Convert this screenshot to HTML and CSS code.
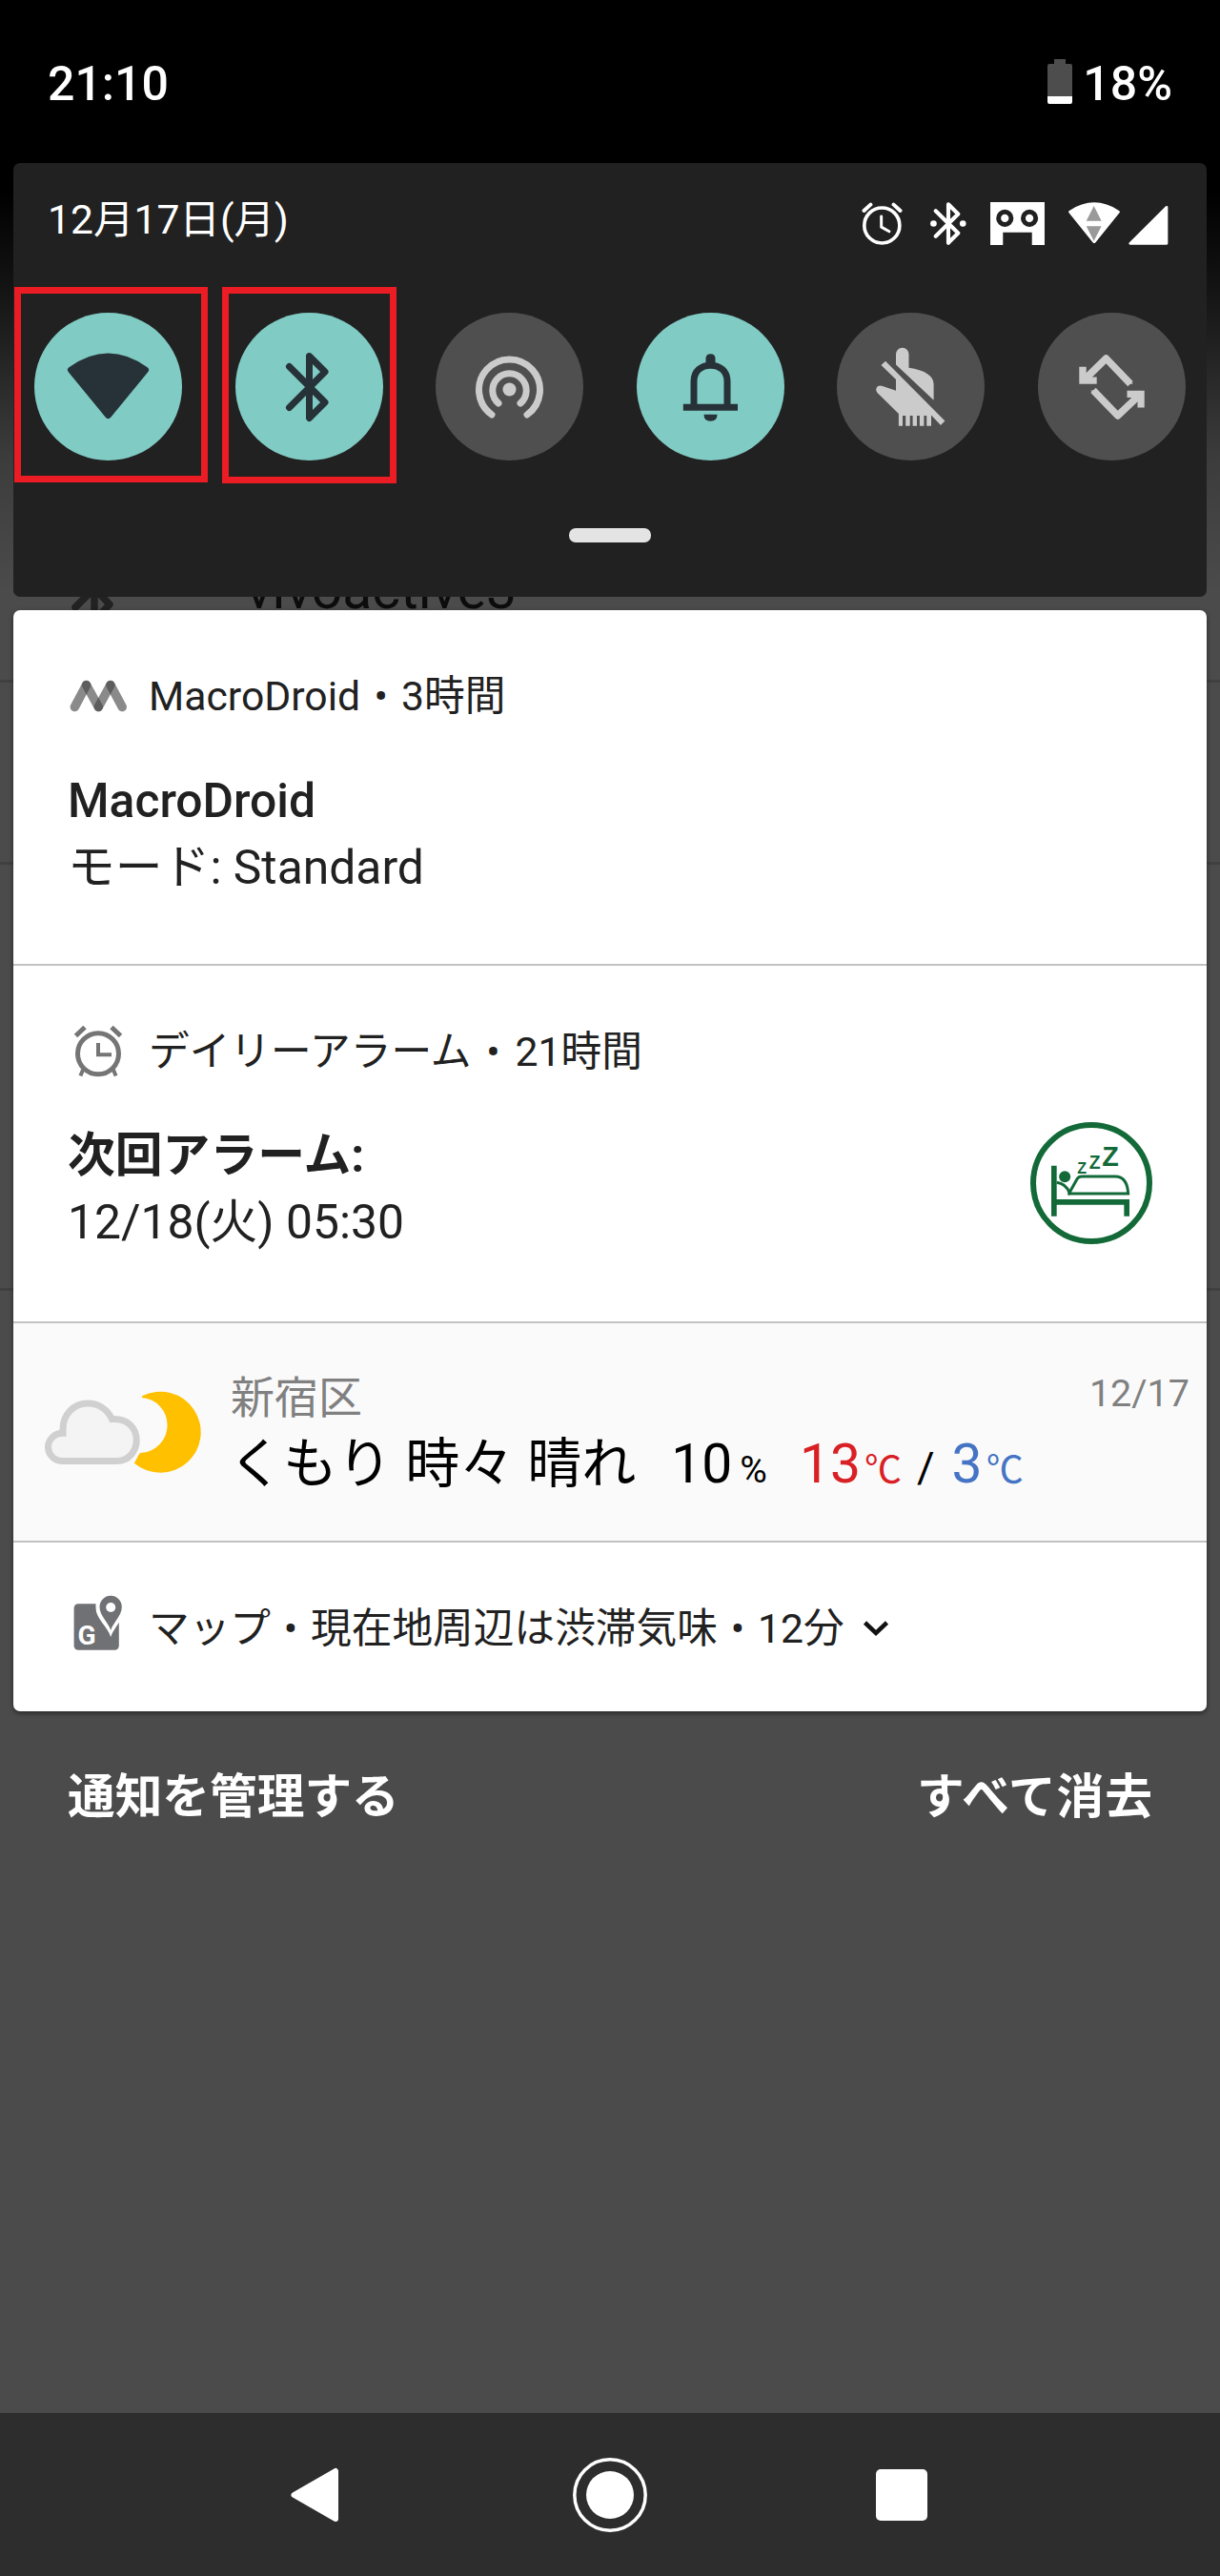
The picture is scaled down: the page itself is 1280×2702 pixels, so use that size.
FILE: index.html
```html
<!DOCTYPE html>
<html lang="ja">
<head>
<meta charset="utf-8">
<title>通知シェード</title>
<link rel="stylesheet" href="styles.css">
</head>
<body>
<div class="screen">
  <div class="backdrop-line line-a"></div>
  <div class="backdrop-line line-b"></div>
  <div class="backdrop-line line-c"></div>

  <header class="status-bar">
    <span class="clock">21:10</span>
    <span class="battery">
      <svg width="26" height="47" viewBox="0 0 26 47"><path fill="#4d4d4d" d="M7 0h12v5h5q2 0 2 2v32H0V7q0-2 2-2h5z"/><path fill="#fff" d="M0 39h26v6q0 2-2 2H2q-2 0-2-2z"/></svg>
      <span class="battery-level">18%</span>
    </span>
  </header>

  <section class="quick-settings">
    <div class="qs-header">
      <span class="date">12月17日(月)</span>
      <span class="qs-icons">
        <svg class="i-alarm" width="43" height="45" viewBox="132 546 129 136" fill="none" stroke="#fff" stroke-linecap="round" stroke-linejoin="round"><circle cx="196" cy="620" r="56" stroke-width="11"/><path stroke-width="9" d="M194 591V625L219 639"/><path stroke-width="12" d="M139 573L160 554M233 554L254 573"/></svg>
        <svg class="i-bt" width="38" height="45" viewBox="347 546 114 136" fill="none" stroke="#fff" stroke-linecap="round" stroke-linejoin="round"><path stroke-width="12.500" d="M364 574L435 644L404 675V553L435 584L364 654"/><circle cx="357" cy="614" r="10" fill="#fff" stroke="none"/><circle cx="450" cy="614" r="10" fill="#fff" stroke="none"/></svg>
        <svg class="i-tape" width="57" height="45" viewBox="537 546 172 136"><path fill="#fff" d="M537 546H709V682H669V642H577V682H537z"/><g fill="#fff" stroke="#212121" stroke-width="15"><circle cx="583" cy="597" r="20"/><circle cx="661" cy="597" r="20"/></g></svg>
        <svg class="i-wifi" width="54" height="45" viewBox="783 546 162 136"><path fill="#fff" stroke="#fff" stroke-width="10" stroke-linejoin="round" d="M864 671L788 577Q864 527 940 577z"/><path fill="#9a9a9a" d="M863 558L887 606H839zM839 622H887L863 669z"/></svg>
        <svg width="42" height="45" viewBox="974 546 125 136"><path fill="#fff" stroke="#fff" stroke-width="8" stroke-linejoin="round" d="M978 677L1094 562V677z"/></svg>
      </span>
    </div>
    <div class="tiles">
      <div class="tile on">
        <svg viewBox="0 0 155 155"><path fill="#263238" stroke="#263238" stroke-width="7" stroke-linejoin="round" d="M77.5 107.5L38.5 60Q77.5 32 116.5 60z"/></svg>
        <div class="mark mark-wifi"></div>
      </div>
      <div class="tile on">
        <svg viewBox="0 0 155 155" fill="none" stroke="#263238" stroke-width="7" stroke-linecap="round" stroke-linejoin="round"><path d="M56.5 56.5L94 94L77.5 110.500V45.500L94 62L56.5 99.500"/></svg>
        <div class="mark mark-bt"></div>
      </div>
      <div class="tile">
        <svg viewBox="0 0 155 155" fill="none" stroke="#cbcbcb" stroke-width="7" stroke-linecap="round"><circle cx="77.5" cy="80.500" r="7" fill="#cbcbcb" stroke="none"/><path d="M66 95A17.700 17.700 0 1 1 89 95M59 107A32 32 0 1 1 96 107"/></svg>
      </div>
      <div class="tile on">
        <svg viewBox="0 0 155 155" fill="none" stroke="#263238" stroke-width="7"><path d="M48.800 99.200H106M60 97V72C60 61 68 55.200 77.500 55.200S95 61 95 72V97"/><path fill="#263238" stroke="none" d="M72.500 54V48Q72.500 43.300 77.500 43.300T82.500 48V54zM70.500 106.700H84.500Q84.500 113.700 77.500 113.700T70.500 106.700z"/></svg>
      </div>
      <div class="tile">
        <svg viewBox="0 0 155 155" fill="#cbcbcb"><path d="M62 54.400V43.500A6.700 6.700 0 0 1 75.500 43.500V57.700C92 60 101.600 66 101.600 75V91.700z"/><path d="M46.500 55L51 50.700L113.400 113.400L109 118L99 107.500V118.700H94.200V108H91.400V118.700H86.900V108H84V118.700H79.600V108H76.700V118.700H72.200V108H69V118.700H64.900V106L42.500 84C39 79 43.500 75 48 77L62 81.700V70z"/></svg>
      </div>
      <div class="tile">
        <svg viewBox="0 0 155 155" fill="none" stroke="#cbcbcb" stroke-width="7.500" stroke-linejoin="round"><path d="M97 74.700L71.500 48L48 71M58 81.400L83.700 108L108.500 84.500"/><path fill="#cbcbcb" stroke="none" d="M92 74.700H99.700L96 70zM55.200 81.400H63L60 86zM43.300 56.700H50.700V67.400H61.700V74.700H43.300zM93.500 81.700H111.700V99.500H104.500V89H93.500z"/></svg>
      </div>
    </div>
    <div class="handle"></div>
  </section>

  <div class="peek">
    <svg width="46" height="60" viewBox="0 0 46 60" fill="none" stroke="#222" stroke-width="7.500" stroke-linecap="round" stroke-linejoin="round"><path d="M4 28L24 8L40 25L24 42V0"/></svg>
    <span>vivoactive3</span>
  </div>

  <main class="notifications">
    <article class="card card-macro">
      <div class="card-head">
        <span class="app-icon"><svg width="61" height="34" viewBox="0 0 61 34" fill="none" stroke="#424242" stroke-opacity=".62" stroke-width="9.500" stroke-linecap="round"><path d="M5.400 28.500L17.600 5.500"/><path d="M17.600 5.500L30.300 28.500"/><path d="M30.300 28.500L42.900 5.500"/><path d="M42.900 5.500L55.200 28.500"/></svg></span>
        <span>MacroDroid</span><span class="dot">•</span><span>3時間</span>
      </div>
      <div class="title">MacroDroid</div>
      <div class="text">モード: Standard</div>
    </article>

    <article class="card card-alarm">
      <div class="card-head">
        <span class="app-icon"><svg class="i-clock" width="54" height="56" viewBox="0 0 54 56" fill="none" stroke="#757575" stroke-width="5"><circle cx="27" cy="31.300" r="21.500"/><path d="M3.500 12.500L13 3.500M41 3.500L50.500 12.500"/><path stroke-width="4" d="M27 20V32.200H41M11.500 47L8.400 54.500M42.500 47L45.600 54.500"/></svg></span>
        <span>デイリーアラーム</span><span class="dot">•</span><span>21時間</span>
      </div>
      <div class="alarm-body">
        <div>
          <div class="title title-ja">次回アラーム:</div>
          <div class="text">12/18(火) 05:30</div>
        </div>
        <svg class="bed" width="128" height="128" viewBox="123 110 384 384" fill="none" stroke="#136a38"><circle cx="315" cy="302" r="183" stroke-width="18"/><path stroke-width="17" d="M197.500 247V406M197 361.500H426.500V406"/><path stroke-width="9" d="M206 300Q234 303 246 332L270 289Q275 281 285 281H390Q428 281 431 335H245V325"/><circle cx="231.500" cy="282" r="18" fill="#136a38" stroke="none"/><g class="zs"><text x="271" y="272" font-size="48">Z</text><text x="308" y="258" font-size="58">Z</text><text x="349" y="247" font-size="86">Z</text></g></svg>
      </div>
    </article>

    <article class="card card-weather">
      <svg class="sky" width="170" height="92" viewBox="0 0 170 92"><path fill="#ffc000" d="M105 8.300A42.500 42.500 0 1 1 96.800 78.700L100 73Q102 67.500 105 67.800A29 29 0 0 0 105 10z"/><path fill="#f4f4f4" stroke="#d0d0d0" stroke-width="7" d="M22 47.300A15 14.600 0 0 0 21 76.500H78.500C91 76.500 99.200 66 99.200 54.500C99.200 42 90 31.500 73.500 32.600C68 21 58 16 48 16C33 16 22 28 22 43z"/></svg>
      <div class="forecast">
        <div class="place">新宿区</div>
        <div class="conditions">
          <span class="sky-text">くもり 時々 晴れ</span><span class="num rain">10</span><span class="unit pct">%</span><span class="num high">13</span><span class="unit high-unit">℃</span><span class="unit slash">/</span><span class="num low">3</span><span class="unit low-unit">℃</span>
        </div>
      </div>
      <div class="day">12/17</div>
    </article>

    <article class="card card-maps">
      <div class="card-head">
        <span class="app-icon"><svg class="i-map" width="52" height="60" viewBox="0 0 52 60"><rect x=".6" y="9.300" width="47.200" height="48.500" rx="4.500" fill="#707174"/><path fill="#fff" d="M39.200 44C36 33 23.500 25 23.500 13.500V7H52V22C48 30 42 36 39.200 44z"/><path fill="#707174" d="M39.200 37C37 29 27.500 22 27.500 12.500A11.600 11.600 0 0 1 50.800 12.500C50.800 22 41.500 29 39.200 37z"/><circle cx="39.200" cy="13" r="5" fill="#fff"/><text class="g-mark" x="4.500" y="52">G</text></svg></span>
        <span>マップ</span><span class="dot">•</span><span>現在地周辺は渋滞気味</span><span class="dot">•</span><span>12分</span>
        <svg class="chevron" width="28" height="18" viewBox="0 0 28 18" fill="none" stroke="#111" stroke-width="4.500"><path d="M2.500 3L14 14L25.500 3"/></svg>
      </div>
    </article>
  </main>

  <div class="actions">
    <span>通知を管理する</span>
    <span class="clear-all">すべて消去</span>
  </div>

  <nav class="nav-bar">
    <svg width="50" height="58" viewBox="0 0 50 58"><path fill="#fff" stroke="#fff" stroke-width="6" stroke-linejoin="round" d="M3.500 29L47 4V54z"/></svg>
    <svg width="78" height="78" viewBox="0 0 78 78"><circle cx="39" cy="39" r="37.200" fill="none" stroke="#fff" stroke-width="3.500"/><circle cx="39" cy="39" r="25" fill="#fff"/></svg>
    <span class="recents"></span>
  </nav>
</div>
</body>
</html>
```
FILE: styles.css
```css
* { box-sizing: border-box; }

body {
  margin: 0;
  font-family: Roboto, "Noto Sans CJK JP", sans-serif;
  color: #212121;
}

svg { display: block; flex: none; }

.screen {
  position: relative;
  display: flex;
  flex-direction: column;
  width: 1280px;
  height: 2702px;
  overflow: hidden;
  white-space: nowrap;
  background: linear-gradient(#000 200px, #151515 310px, #3c3c3c 480px, #4b4b4b 620px);
}

/* dividers of the dimmed settings list behind the shade */
.backdrop-line {
  position: absolute;
  left: 0;
  right: 0;
  height: 3px;
  background: #404040;
}
.line-a { top: 713px; }
.line-b { top: 904px; }
.line-c { top: 1351px; }

.status-bar {
  display: flex;
  justify-content: space-between;
  align-items: center;
  height: 171px;
  padding: 5px 50px 0 50px;
  color: #fff;
  font-size: 50px;
  font-weight: 500;
}
.battery { display: flex; align-items: center; gap: 11px; }
.battery svg { margin-top: -5px; }

.quick-settings {
  height: 455px;
  margin: 0 14px;
  border-radius: 7px;
  background: #212121;
  position: relative;
}
.qs-header {
  display: flex;
  justify-content: space-between;
  align-items: center;
  height: 127px;
  padding: 0 40px 0 36px;
}
.date { color: #fff; font-size: 42.600px; line-height: 60px; margin-bottom: 10px; }
.qs-icons { display: flex; }
.i-alarm { margin-right: 29px; }
.i-bt, .i-tape { margin-right: 25px; }
.i-wifi { margin-right: 9px; }

.tiles {
  display: flex;
  gap: 55.5px;
  padding: 29.500px 0 0 22px;
}
.tile {
  position: relative;
  flex: none;
  width: 155px;
  height: 155px;
  border-radius: 50%;
  background: #4f4f4f;
}
.tile.on { background: #80cbc4; }
.mark { position: absolute; border: 7px solid #eb1c24; }
.mark-wifi { left: -21px; top: -27px; width: 203px; height: 205px; }
.mark-bt { left: -13.500px; top: -27px; width: 183px; height: 206px; }

.handle {
  width: 86px;
  height: 15px;
  margin: 71.500px auto 0;
  border-radius: 7px;
  background: #e4e4e4;
}

.peek {
  display: flex;
  height: 14px;
  padding-left: 75px;
  overflow: hidden;
  color: #0c0c0c;
  font-size: 57px;
  line-height: 60px;
}
.peek svg { margin-top: -17px; }
.peek span { margin: -37px 0 0 137px; }

.notifications {
  position: relative;
  margin: 0 14px;
  border-radius: 7px;
  background: #fff;
  overflow: hidden;
  box-shadow: 0 2px 5px rgba(0, 0, 0, .5);
}
.card { padding: 60px 57px 0 58px; border-bottom: 2px solid #c2c2c2; }
.card-macro { height: 373px; }
.card-alarm { height: 375px; }
.card-maps { height: 177px; border-bottom: 0; }

.card-head {
  display: flex;
  align-items: center;
  height: 60px;
  font-size: 42.700px;
  line-height: 60px;
}
.app-icon { display: flex; justify-content: center; width: 61px; margin-right: 23px; }
.card-macro .app-icon { margin: 0 22px 0 1px; }
.dot { width: 42px; text-align: center; }
.card-macro .dot { width: 43px; }
.card-alarm .dot { width: 46px; }
.i-clock { margin-top: -2px; }
.i-map { margin-top: -11px; }
.chevron { margin-left: 19px; }

.title, .text { font-size: 49.800px; line-height: 69.500px; margin-left: -1px; }
.title { font-weight: 500; }
.title-ja { font-weight: 700; }
.card-macro .title { margin-top: 46px; }
.alarm-body {
  display: flex;
  justify-content: space-between;
  align-items: flex-start;
  margin-top: 45px;
}
.bed { margin-top: -1px; }
.zs { fill: #136a38; stroke: none; font-family: "Liberation Sans", sans-serif; font-weight: 700; }
.g-mark { fill: #fff; font-size: 28px; font-weight: 700; }

.card-weather {
  display: flex;
  align-items: flex-start;
  height: 230px;
  padding: 48px 18px 0 30px;
  background: #fafafa;
}
.sky { margin-top: 20px; }
.forecast { margin-left: 28px; }
.place { color: #808080; font-size: 46px; line-height: 60px; }
.conditions {
  display: flex;
  align-items: baseline;
  color: #000;
  font-size: 57px;
  line-height: 79px;
}
.sky-text { margin-left: -2px; }
.unit { font-size: 39px; }
.rain { margin-left: 37px; }
.pct { margin-left: 8px; }
.num.high { margin-left: 34px; }
.high, .high-unit { color: #d92024; }
.high-unit, .low-unit { margin-left: 4px; }
.slash { margin-left: 16px; font-size: 45px; }
.low { margin-left: 18px; }
.low, .low-unit { color: #4674c4; }
.day { margin: -4px 0 0 auto; color: #808080; font-size: 39.500px; line-height: 60px; }

.actions {
  display: flex;
  justify-content: space-between;
  align-items: center;
  height: 180px;
  padding: 0 70px 0 71px;
  color: #fff;
  font-size: 49.700px;
  font-weight: 700;
  line-height: 60px;
}
.clear-all { letter-spacing: 1px; }

.nav-bar {
  display: flex;
  align-items: center;
  height: 171px;
  margin-top: auto;
  padding-left: 305px;
  background: #2d2d2d;
}
.nav-bar svg { margin-right: 246px; }
.nav-bar svg + svg { margin-right: 240px; }
.recents { width: 54px; height: 54px; border-radius: 5px; background: #fff; }
```
